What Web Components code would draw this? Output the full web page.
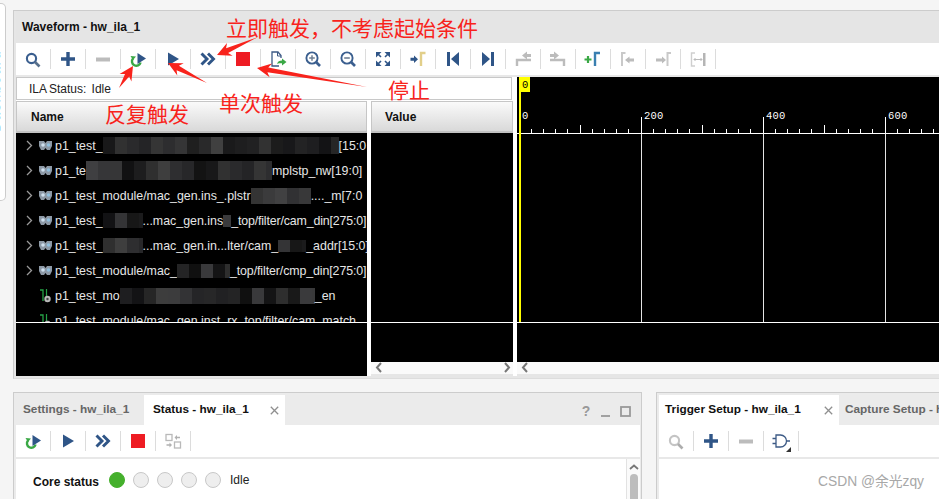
<!DOCTYPE html>
<html>
<head>
<meta charset="utf-8">
<title>Waveform - hw_ila_1</title>
<style>
  html, body { margin: 0; padding: 0; }
  body {
    width: 939px; height: 499px; overflow: hidden; position: relative;
    background: #f5f5f5; color: #111;
    font: 12px "Liberation Sans", Arial, sans-serif;
  }
</style>
</head>
<body>
<ide-desk>
  <side-rail slot="rail">Dashboard</side-rail>

  <wave-panel slot="main" title-text="Waveform - hw_ila_1">
    <tool-bar slot="tools" icons="search plus minus loop play fast stop export zoomin zoomout fit goto first last prevoff nextoff addcur curprev curnext span"></tool-bar>
    <status-box slot="status">ILA Status:&nbsp; Idle</status-box>

    <signal-column slot="name" heading="Name" width="351" pad="14">
      <signal-row kind="bus"><span>p1_test_</span><mosaic-patch w="236" h="17" seed="3"></mosaic-patch><span>[15:0</span></signal-row>
      <signal-row kind="bus"><span>p1_te</span><mosaic-patch w="186" h="19" seed="7"></mosaic-patch><span>mplstp_nw[19:0]</span></signal-row>
      <signal-row kind="bus"><span>p1_test_module/mac_gen.ins_.plstr</span><mosaic-patch w="60" h="16" seed="11"></mosaic-patch><span>...._m[7:0</span></signal-row>
      <signal-row kind="bus"><span>p1_test_</span><mosaic-patch w="40" h="15" seed="5"></mosaic-patch><span>...mac_gen.ins</span><mosaic-patch w="8" h="12" seed="9"></mosaic-patch><span style="letter-spacing:-.15px">_top/filter/cam_din[275:0]</span></signal-row>
      <signal-row kind="bus"><span>p1_test_</span><mosaic-patch w="40" h="15" seed="13"></mosaic-patch><span>...mac_gen.in...lter/cam_</span><mosaic-patch w="28" h="12" seed="2"></mosaic-patch><span>_addr[15:0]</span></signal-row>
      <signal-row kind="bus"><span>p1_test_module/mac_</span><mosaic-patch w="53" h="14" seed="17"></mosaic-patch><span style="letter-spacing:-.1px">_top/filter/cmp_din[275:0]</span></signal-row>
      <signal-row kind="wire"><span>p1_test_mo</span><mosaic-patch w="195" h="16" seed="19"></mosaic-patch><span>_en</span></signal-row>
      <signal-row kind="wire"><span>p1_test_module/mac_gen.inst_rx_top/filter/cam_match</span></signal-row>
    </signal-column>

    <signal-column slot="value" heading="Value" width="142" pad="13" scroll="both"></signal-column>

    <wave-view slot="wave"></wave-view>
  </wave-panel>

  <dock-panel slot="left" edge="right">
    <tab-strip slot="tabs">
      <panel-tab w="128" pad="7" off>Settings - hw_ila_1</panel-tab>
      <panel-tab w="141" pad="9" active closable>Status - hw_ila_1</panel-tab>
      <window-tools slot="tools"></window-tools>
    </tab-strip>
    <tool-bar slot="tools" icons="loop play fast stop statoff"></tool-bar>
    <core-status>Core status</core-status>
    <v-scroll slot="scroll"></v-scroll>
  </dock-panel>

  <dock-panel slot="right">
    <tab-strip slot="tabs">
      <panel-tab w="180" pad="6" active closable>Trigger Setup - hw_ila_1</panel-tab>
      <panel-tab w="100" pad="6" off>Capture Setup - h</panel-tab>
    </tab-strip>
    <tool-bar slot="tools" icons="searchoff plus minus gate"></tool-bar>
  </dock-panel>
</ide-desk>
<red-notes></red-notes>

<script>
const BLUE = '#2f5587';
const OFF = '#bcbcbc';
const GREEN = '#3aa845';

const ICONS = {
  search: `<circle cx="8.5" cy="9.5" r="4.6" fill="none" stroke="#3b5f8f" stroke-width="2.1"/><path d="M12 13l4.5 4.5" stroke="#58708c" stroke-width="2.6"/>`,
  searchoff: `<circle cx="8.5" cy="9.5" r="4.6" fill="none" stroke="#c4c4c4" stroke-width="2.1"/><path d="M12 13l4.5 4.5" stroke="#adadad" stroke-width="2.6"/>`,
  plus: `<path d="M3 10h14M10 3v14" stroke="${BLUE}" stroke-width="3.4"/>`,
  minus: `<path d="M3 10.5h14" stroke="${OFF}" stroke-width="4"/>`,
  loop: `<path d="M5 9.5A4.4 4.4 0 1 0 12.6 13.5" fill="none" stroke="${GREEN}" stroke-width="2.4"/><path d="M2.5 7l5.5 .5-3 3.5z" fill="${GREEN}"/><path d="M9.5 4l8.5 5.5-8.5 5.5z" fill="${BLUE}"/>`,
  play: `<path d="M5 3.5l11 6.5-11 6.5z" fill="${BLUE}"/>`,
  fast: `<path d="M3.5 4.5l5.5 5.5-5.5 5.5M10 4.5l5.5 5.5-5.5 5.5" fill="none" stroke="${BLUE}" stroke-width="2.9"/>`,
  stop: `<rect x="3" y="3" width="14" height="14" fill="#ee1c23"/>`,
  export: `<path d="M13 9V6.5L10 3H4v14h7" fill="none" stroke="#3c5a85" stroke-width="1.3"/><path d="M9.5 3v4h3.5" fill="none" stroke="#3c5a85" stroke-width="1"/><path d="M9 15c.5-2.5 2.5-3.5 5-3.5V9.5l4.5 3.5-4.5 3.5V14.2c-2 0-3.500 0-5 .8z" fill="${GREEN}"/>`,
  zoomin: `<circle cx="9" cy="9" r="5.6" fill="none" stroke="#3b5f8f" stroke-width="1.9"/><path d="M6.2 9h5.6M9 6.2v5.6" stroke="#6f7f93" stroke-width="1.5"/><path d="M13 13l4 4" stroke="#3b5f8f" stroke-width="2.6"/>`,
  zoomout: `<circle cx="9" cy="9" r="5.6" fill="none" stroke="#3b5f8f" stroke-width="1.9"/><path d="M6.2 9h5.6" stroke="#6f7f93" stroke-width="1.6"/><path d="M13 13l4 4" stroke="#3b5f8f" stroke-width="2.6"/>`,
  fit: `<g fill="${BLUE}"><path d="M3 3h5.5L3 8.5z"/><path d="M17 3h-5.5L17 8.5z"/><path d="M3 17h5.5L3 11.5z"/><path d="M17 17h-5.5L17 11.5z"/></g><path d="M5 5l3 3M15 5l-3 3M5 15l3-3M15 15l-3-3" stroke="${BLUE}" stroke-width="1.6"/>`,
  goto: `<path d="M2.5 8.7h3.5V6.5l4 3.7-4 3.7v-2.2H2.5z" fill="${BLUE}"/><path d="M13 17V4h4.5" fill="none" stroke="#e2cf8a" stroke-width="2.4"/>`,
  first: `<path d="M4 3h3v14H4zM16 3v14L8 10z" fill="${BLUE}"/>`,
  last: `<path d="M13 3h3v14h-3zM4 3v14l8-7z" fill="${BLUE}"/>`,
  prevoff: `<path d="M4 17v-6h14" fill="none" stroke="${OFF}" stroke-width="2.4"/><path d="M9 6.5l5-4V5h4v3h-4v2.5z" fill="${OFF}"/>`,
  nextoff: `<path d="M16 17v-6H2" fill="none" stroke="${OFF}" stroke-width="2.4"/><path d="M11 6.5l-5-4V5H2v3h4v2.5z" fill="${OFF}"/>`,
  addcur: `<path d="M1.5 10.5h7M5 7v7" stroke="${GREEN}" stroke-width="2.2"/><path d="M12 17V4h5" fill="none" stroke="#3a7fb0" stroke-width="2.4"/>`,
  curprev: `<path d="M4 17V4h3.5" fill="none" stroke="#c9c9c9" stroke-width="2"/><path d="M7 11l4.5-3.5V9.5H16v3h-4.5v2z" fill="${OFF}"/>`,
  curnext: `<path d="M3 9.5h6v-2l4 3.5-4 3.5v-2H3z" fill="${OFF}"/><path d="M14.5 17V4H18" fill="none" stroke="#c9c9c9" stroke-width="2"/>`,
  span: `<path d="M7 4H3.5v13H7" fill="none" stroke="#cfcfcf" stroke-width="1.4"/><path d="M6 10.5h8M7.5 9L6 10.5 7.5 12M12.5 9l1.500 1.500L12.500 12" fill="none" stroke="#bbb" stroke-width="1"/><path d="M15 4h2.5v13H15z" fill="#b5b5b5"/>`,
  statoff: `<g fill="none" stroke="#b9b9b9" stroke-width="1.3"><rect x="3" y="3.5" width="6" height="6"/><rect x="11.5" y="11" width="6" height="6"/></g><path d="M11.5 6.5L14 4v1.700h3v1.600h-3V9zM9 14l-2.500 2.500v-1.700h-3v-1.600h3V11.500z" fill="#b0b0b0"/>`,
  gate: `<path d="M5 4h4.5a6 6 0 0 1 0 12H5z" fill="none" stroke="#3c5a85" stroke-width="1.3"/><path d="M1.5 7.5H5M1.5 12.5H5M15.5 10H19" stroke="#3c5a85" stroke-width="1.3"/><path d="M20 16v5h-5z" fill="#333"/>`
};

class IdeDesk extends HTMLElement {
  constructor() {
    super();
    this.attachShadow({ mode: 'open' }).innerHTML = `
      <style>
        :host { display: block; width: 939px; height: 499px; overflow: hidden; }
        .top { display: flex; height: 379px; }
        .bottom { display: flex; gap: 14px; margin-top: 13px; margin-left: 13px; height: 107px; }
        .rail { width: 13px; flex: none; }
      </style>
      <div class="top">
        <div class="rail"><slot name="rail"></slot></div>
        <slot name="main"></slot>
      </div>
      <div class="bottom">
        <slot name="left"></slot>
        <slot name="right"></slot>
      </div>`;
  }
}
customElements.define('ide-desk', IdeDesk);

class SideRail extends HTMLElement {
  constructor() {
    super();
    this.attachShadow({ mode: 'open' }).innerHTML = `
      <style>
        :host {
          display: block; box-sizing: border-box; width: 6px; height: 198px; margin-top: 3px;
          background: #fff; border: 1px solid #ccc; border-left: 0;
          border-radius: 0 5px 5px 0; overflow: hidden;
        }
        div {
          writing-mode: vertical-rl; transform: rotate(180deg);
          margin: 44px 0 0 -11px; width: 13px; line-height: 13px;
          color: #1a3fa0; font-size: 14px; letter-spacing: 1.5px; white-space: nowrap; height: 84px;
        }
      </style>
      <div><slot></slot></div>`;
  }
}
customElements.define('side-rail', SideRail);

class WavePanel extends HTMLElement {
  constructor() {
    super();
    this.attachShadow({ mode: 'open' }).innerHTML = `
      <style>
        :host {
          display: block; box-sizing: border-box; width: 926px; height: 369px; margin-top: 10px;
          border-top: 1px solid #ccc; border-left: 1px solid #ccc; border-bottom: 1px solid #ddd;
          padding-left: 2px; padding-bottom: 2px; background: #e6e6e6;
        }
        header {
          height: 32px; display: flex; align-items: center; padding-left: 6px;
          background: #e5e5e5; font-weight: bold; font-size: 12px; color: #111;
        }
        .gap { height: 2px; background: #e8e8e8; }
        .body { display: flex; height: 299px; background: #fff; }
        .left { width: 497px; flex: none; }
        .cols { display: flex; gap: 4px; margin-top: 1px; }
        .wave { margin-left: 4px; flex: 1; min-width: 0; }
      </style>
      <header></header>
      <slot name="tools"></slot>
      <div class="gap"></div>
      <div class="body">
        <div class="left">
          <slot name="status"></slot>
          <div class="cols"><slot name="name"></slot><slot name="value"></slot></div>
        </div>
        <div class="wave"><slot name="wave"></slot></div>
      </div>`;
  }
  connectedCallback() {
    this.shadowRoot.querySelector('header').textContent = this.getAttribute('title-text');
  }
}
customElements.define('wave-panel', WavePanel);

class ToolBar extends HTMLElement {
  constructor() {
    super();
    this.attachShadow({ mode: 'open' });
  }
  connectedCallback() {
    const icons = this.getAttribute('icons').split(' ');
    this.shadowRoot.innerHTML = `
      <style>
        :host { display: flex; height: 32px; background: #fff; align-items: center; }
        .btn { width: 35px; height: 20px; box-sizing: border-box; border-right: 1px solid #dcdcdc; display: flex; align-items: center; justify-content: center; }
        svg { width: 20px; height: 20px; overflow: visible; display: block; }
      </style>
      ${icons.map(n => `<div class="btn"><svg viewBox="0 0 20 20">${ICONS[n]}</svg></div>`).join('')}`;
  }
}
customElements.define('tool-bar', ToolBar);

class StatusBox extends HTMLElement {
  constructor() {
    super();
    this.attachShadow({ mode: 'open' }).innerHTML = `
      <style>
        :host {
          display: flex; align-items: center; box-sizing: border-box; width: 496px; height: 23px;
          padding-left: 12px; background: #fff; border: 1px solid #c8c8c8; color: #222; font-size: 12px;
          word-spacing: -0.7px;
        }
      </style>
      <slot></slot>`;
  }
}
customElements.define('status-box', StatusBox);

class SignalColumn extends HTMLElement {
  constructor() {
    super();
    this.attachShadow({ mode: 'open' });
  }
  connectedCallback() {
    const hasScroll = this.hasAttribute('scroll');
    this.shadowRoot.innerHTML = `
      <style>
        :host { display: block; width: ${this.getAttribute('width')}px; flex: none; }
        .head {
          box-sizing: border-box; height: 32px; display: flex; align-items: center;
          padding-left: ${this.getAttribute('pad')}px; font-weight: bold; font-size: 12px; color: #111;
          background: linear-gradient(#fafafa, #d9d9d9); border: 1px solid #c6c6c6; border-bottom: 2px solid #c2c2c2;
        }
        .list { height: 189px; background: #000; overflow: hidden; }
        .line { height: 1px; background: #fff; }
        .foot { background: #000; height: ${hasScroll ? 39 : 53}px; }
      </style>
      <div class="head">${this.getAttribute('heading')}</div>
      <div class="list"><slot></slot></div>
      <div class="line"></div>
      <div class="foot"></div>
      ${hasScroll ? '<h-scroll right></h-scroll>' : ''}`;
  }
}
customElements.define('signal-column', SignalColumn);

class SignalRow extends HTMLElement {
  constructor() {
    super();
    this.attachShadow({ mode: 'open' });
  }
  connectedCallback() {
    const bus = this.getAttribute('kind') === 'bus';
    const chevron = bus ? `<svg width="7" height="11" viewBox="0 0 7 11"><path d="M1 1l4.5 4.5L1 10" fill="none" stroke="#9a9a9a" stroke-width="1.3"/></svg>` : '';
    const icon = bus
      ? `<svg width="13" height="11" viewBox="0 0 13 11"><path d="M0 1h5l1.5 2L8 1h5v5l-2 4H8L6.5 8 5 10H2L0 6z" fill="#8d99a6"/><circle cx="4" cy="5" r="1.8" fill="#cfe0ee"/><circle cx="9.5" cy="5" r="1.8" fill="#8fc0e0"/></svg>`
      : `<svg width="13" height="14" viewBox="0 0 13 14"><path d="M1 1h3v11" fill="none" stroke="#25a045" stroke-width="1.3"/><path d="M7.5 0v7" stroke="#25a045" stroke-width="1.2"/><circle cx="8.5" cy="10" r="3.2" fill="#b9b9b9"/><circle cx="8.5" cy="10" r="1.2" fill="#444"/></svg>`;
    this.shadowRoot.innerHTML = `
      <style>
        :host {
          display: flex; align-items: center; height: 25px; white-space: nowrap;
          color: #e6e6e6; font-size: 12.4px; overflow: hidden;
        }
        .lead { width: 13px; margin-left: 10px; flex: none; display: flex; align-items: center; }
        .ico { width: 13px; margin-right: 3px; flex: none; display: flex; }
        ::slotted(span) { flex: none; }
      </style>
      <div class="lead">${chevron}</div>
      <div class="ico">${icon}</div>
      <slot></slot>`;
  }
}
customElements.define('signal-row', SignalRow);

class MosaicPatch extends HTMLElement {
  constructor() {
    super();
    this.attachShadow({ mode: 'open' });
  }
  connectedCallback() {
    const w = +this.getAttribute('w');
    const h = +this.getAttribute('h');
    let seed = +this.getAttribute('seed');
    let cells = '';
    for (let x = 0; x < w; x += 12) {
      seed = (seed * 73 + 41) % 101;
      const g = 16 + seed % 50;
      cells += `<i style="background:rgb(${g},${g},${g + (seed % 3)})"></i>`;
    }
    this.shadowRoot.innerHTML = `
      <style>
        :host { display: block; flex: none; width: ${w}px; height: ${h}px; overflow: hidden; background: #1a1a1a; }
        div { display: flex; height: 100%; }
        i { display: block; width: 12px; flex: none; }
      </style>
      <div>${cells}</div>`;
  }
}
customElements.define('mosaic-patch', MosaicPatch);

class HScroll extends HTMLElement {
  constructor() {
    super();
    this.attachShadow({ mode: 'open' });
  }
  connectedCallback() {
    const chev = d => `<svg width="8" height="11" viewBox="0 0 8 11"><path d="${d}" fill="none" stroke="#777" stroke-width="2"/></svg>`;
    this.shadowRoot.innerHTML = `
      <style>
        :host {
          display: flex; justify-content: space-between; align-items: center; box-sizing: border-box;
          height: 14px; padding: 0 2px 2px 4px; background: #fafafa; border-bottom: 2px solid #e6e6e6;
        }
      </style>
      ${chev('M6 1L2 5.5 6 10')}
      ${this.hasAttribute('right') ? chev('M2 1l4 4.5L2 10') : ''}`;
  }
}
customElements.define('h-scroll', HScroll);

class WaveView extends HTMLElement {
  constructor() {
    super();
    this.attachShadow({ mode: 'open' });
  }
  connectedCallback() {
    let marks = '';
    // ruler spacing: one label every 122px, ten ticks between labels
    for (let i = 0; i * 12.2 < 422; i++) {
      const x = Math.round(1.5 + i * 12.2) + 0.5;
      const len = i % 10 === 0 ? 16 : i % 5 === 0 ? 8 : 4;
      marks += `<path d="M${x} ${56 - len}V56" stroke="#fff"/>`;
    }
    let labels = '';
    [0, 200, 400, 600].forEach((n, i) => {
      const x = Math.round(1.5 + i * 122);
      labels += `<text x="${x + 3}" y="42">${n}</text>`;
      if (i) marks += `<path d="M${x + 0.5} 56V245" stroke="#e4e4e4"/>`;
    });
    this.shadowRoot.innerHTML = `
      <style>
        :host { display: block; height: 299px; overflow: hidden; }
        svg { display: block; background: #000; }
        text { font: 10.5px "Liberation Mono", monospace; fill: #fff; letter-spacing: 0.2px; }
        text.cur { fill: #000; }
      </style>
      <svg width="422" height="285" viewBox="0 0 422 285" shape-rendering="crispEdges">
        ${marks}
        <path d="M0 56.5H422" stroke="#fff"/>
        <path d="M0 245.5H422" stroke="#fff"/>
        <rect x="2" y="0" width="2" height="245" fill="#ff0"/>
        <rect x="3" y="0" width="10" height="15" fill="#ff0"/>
        <text class="cur" x="5" y="11">0</text>
        ${labels}
      </svg>
      <h-scroll></h-scroll>`;
  }
}
customElements.define('wave-view', WaveView);

class DockPanel extends HTMLElement {
  constructor() {
    super();
    this.attachShadow({ mode: 'open' }).innerHTML = `
      <style>
        :host {
          display: block; box-sizing: border-box; height: 107px; flex: none;
          border-top: 1px solid #ccc; border-left: 1px solid #ccc;
          padding: 2px 0 0 2px; background: #ebebeb;
        }
        :host([edge="right"]) { width: 629px; border-right: 1px solid #ccc; padding-right: 1px; }
        :host(:not([edge])) { width: 283px; }
        .line { height: 2px; background: #e8e8e8; }
        .content { display: flex; height: 40px; background: #fff; }
        .main { flex: 1; min-width: 0; }
      </style>
      <slot name="tabs"></slot>
      <slot name="tools"></slot>
      <div class="line"></div>
      <div class="content">
        <div class="main"><slot></slot></div>
        <slot name="scroll"></slot>
      </div>`;
  }
}
customElements.define('dock-panel', DockPanel);

class TabStrip extends HTMLElement {
  constructor() {
    super();
    this.attachShadow({ mode: 'open' }).innerHTML = `
      <style>
        :host { display: flex; height: 30px; background: #ebebeb; overflow: hidden; }
        .end { margin-left: auto; }
      </style>
      <slot></slot>
      <div class="end"><slot name="tools"></slot></div>`;
  }
}
customElements.define('tab-strip', TabStrip);

class PanelTab extends HTMLElement {
  constructor() {
    super();
    this.attachShadow({ mode: 'open' });
  }
  connectedCallback() {
    const close = this.hasAttribute('closable')
      ? `<svg class="x" width="9" height="9" viewBox="0 0 9 9"><path d="M.8.8l7.4 7.4M8.2.8L.8 8.2" stroke="#8f8f8f" stroke-width="1.3"/></svg>` : '';
    this.shadowRoot.innerHTML = `
      <style>
        :host {
          display: flex; align-items: center; box-sizing: border-box; flex: none;
          width: ${this.getAttribute('w')}px; padding: 0 6px 3px ${this.getAttribute('pad')}px;
          font-weight: bold; font-size: 11.8px; color: #111; white-space: nowrap; overflow: hidden;
        }
        :host([active]) { background: #fff; }
        :host([off]) { color: #666; }
        .x { margin-left: auto; margin-top: 4px; flex: none; }
      </style>
      <slot></slot>${close}`;
  }
}
customElements.define('panel-tab', PanelTab);

class WindowTools extends HTMLElement {
  constructor() {
    super();
    this.attachShadow({ mode: 'open' }).innerHTML = `
      <style>
        :host { display: flex; align-items: center; height: 30px; gap: 9px; padding: 2px 9px 0 0; box-sizing: border-box; color: #999; }
        b { font-size: 14px; width: 10px; text-align: center; }
      </style>
      <b>?</b>
      <svg width="11" height="11" viewBox="0 0 11 11"><path d="M1 10h9" stroke="#999" stroke-width="1.8"/></svg>
      <svg width="11" height="11" viewBox="0 0 11 11"><rect x="1" y="1" width="9" height="9" fill="none" stroke="#999" stroke-width="1.8"/></svg>`;
  }
}
customElements.define('window-tools', WindowTools);

class CoreStatus extends HTMLElement {
  constructor() {
    super();
    this.attachShadow({ mode: 'open' }).innerHTML = `
      <style>
        :host { display: flex; align-items: center; height: 42px; padding-left: 17px; font-size: 12px; color: #111; }
        b { width: 76px; flex: none; padding-top: 3px; }
        i { display: block; box-sizing: border-box; width: 16px; height: 16px; margin-right: 8px; border-radius: 50%; background: #eee; border: 1px solid #c8c8c8; }
        i.on { background: #45b02c; border-color: #45b02c; }
        span { margin-left: 1px; color: #222; }
      </style>
      <b><slot></slot></b>
      <i class="on"></i><i></i><i></i><i></i><i></i>
      <span>Idle</span>`;
  }
}
customElements.define('core-status', CoreStatus);

class VScroll extends HTMLElement {
  constructor() {
    super();
    this.attachShadow({ mode: 'open' }).innerHTML = `
      <style>
        :host { display: block; box-sizing: border-box; width: 14px; height: 40px; border-left: 1px solid #e2e2e2; background: #fafafa; padding: 5px 0 0 1px; overflow: hidden; }
        svg { display: block; margin: 0 auto; }
        div { width: 8px; height: 40px; margin: 4px auto 0; background: #bdbdbd; border-radius: 4px 4px 0 0; }
      </style>
      <svg width="10" height="6" viewBox="0 0 10 6"><path d="M1 5l4-3.5L9 5" fill="none" stroke="#777" stroke-width="1.8"/></svg>
      <div></div>`;
  }
}
customElements.define('v-scroll', VScroll);

class RedNotes extends HTMLElement {
  constructor() {
    super();
    this.attachShadow({ mode: 'open' });
  }
  // tapered arrow: wide head at the tip, narrowing to a point at the tail
  arrow(tx, ty, ex, ey) {
    const len = Math.hypot(ex - tx, ey - ty);
    const ux = (ex - tx) / len, uy = (ey - ty) / len;
    const nx = -uy, ny = ux;
    const pt = (a, b) => `${(tx + ux * a + nx * b).toFixed(1)},${(ty + uy * a + ny * b).toFixed(1)}`;
    return `<polygon fill="#f8231c" points="${pt(0, 0)} ${pt(14, 7)} ${pt(11, 2.5)} ${pt(len, 0)} ${pt(11, -2.5)} ${pt(14, -7)}"/>`;
  }
  connectedCallback() {
    const notes = [
      ['立即触发，不考虑起始条件', 226, 15],
      ['反复触发', 105, 101],
      ['单次触发', 219, 90],
      ['停止', 388, 77]
    ];
    this.shadowRoot.innerHTML = `
      <style>
        :host { position: absolute; left: 0; top: 0; width: 939px; height: 499px; pointer-events: none; }
        svg { position: absolute; left: 0; top: 0; }
        .note {
          position: absolute; color: #f8231c; white-space: nowrap;
          font: 21px/24px "Noto Sans CJK SC", sans-serif;
        }
        .mark {
          position: absolute; left: 818px; top: 474px; color: #a8a8a8; white-space: nowrap;
          font: 13.8px/16px "Liberation Sans", "Noto Sans CJK SC", sans-serif;
        }
      </style>
      <svg width="939" height="499">
        ${this.arrow(217, 55, 258, 37)}
        ${this.arrow(168, 63, 207, 83)}
        ${this.arrow(133, 66, 119, 88)}
        ${this.arrow(257, 68, 367, 87)}
      </svg>
      ${notes.map(n => `<span class="note" style="left:${n[1]}px;top:${n[2]}px">${n[0]}</span>`).join('')}
      <span class="mark">CSDN @余光zqy</span>`;
  }
}
customElements.define('red-notes', RedNotes);
</script>
</body>
</html>
